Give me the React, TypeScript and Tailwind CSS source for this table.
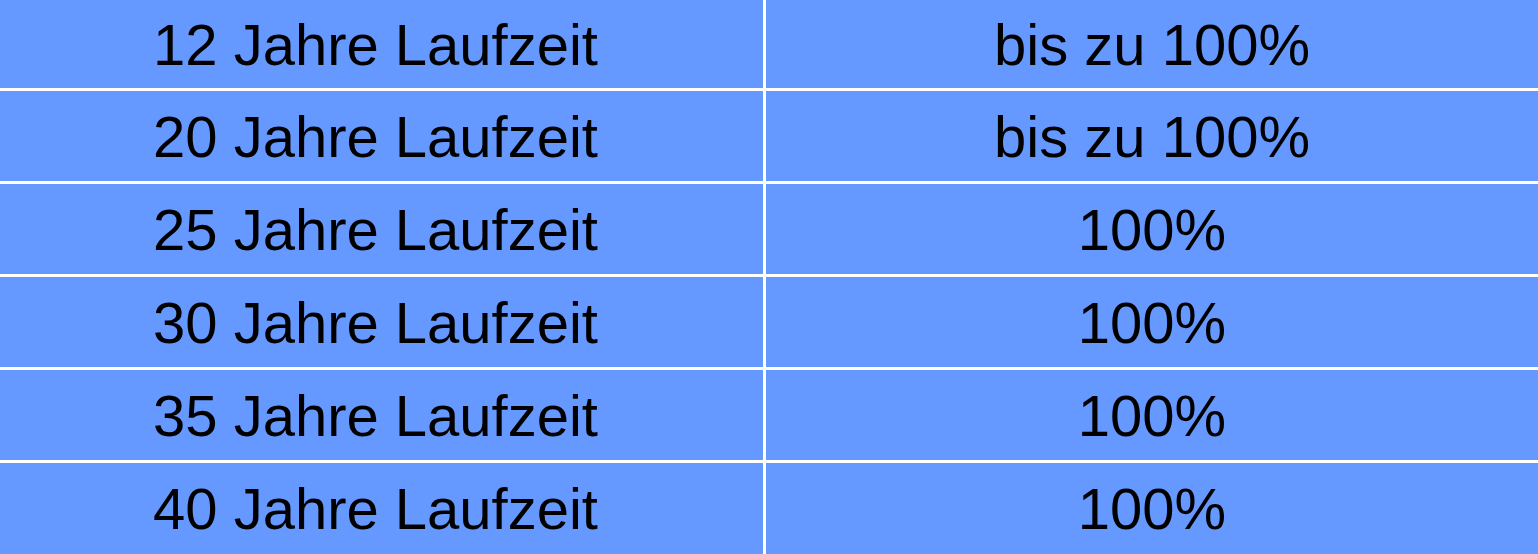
const ROWS = [
    { term: '12 Jahre Laufzeit', share: 'bis zu 100%' },
    { term: '20 Jahre Laufzeit', share: 'bis zu 100%' },
    { term: '25 Jahre Laufzeit', share: '100%' },
    { term: '30 Jahre Laufzeit', share: '100%' },
    { term: '35 Jahre Laufzeit', share: '100%' },
    { term: '40 Jahre Laufzeit', share: '100%' },
];

export default function App() {
    return (
        <div
            className="grid w-[1538px] h-[554px] grid-cols-[763px_772px] grid-rows-[88px_90px_90px_90px_90px_91px] gap-[3px] bg-white text-[58px] text-black"
            style={{ fontFamily: '"Liberation Sans", Arial, sans-serif' }}
        >
            {ROWS.map((row) => (
                <div key={row.term} className="contents">
                    <div className="flex items-center justify-center bg-[#6699ff] pr-[12px]">{row.term}</div>
                    <div className="flex items-center justify-center bg-[#6699ff]">{row.share}</div>
                </div>
            ))}
        </div>
    );
}
